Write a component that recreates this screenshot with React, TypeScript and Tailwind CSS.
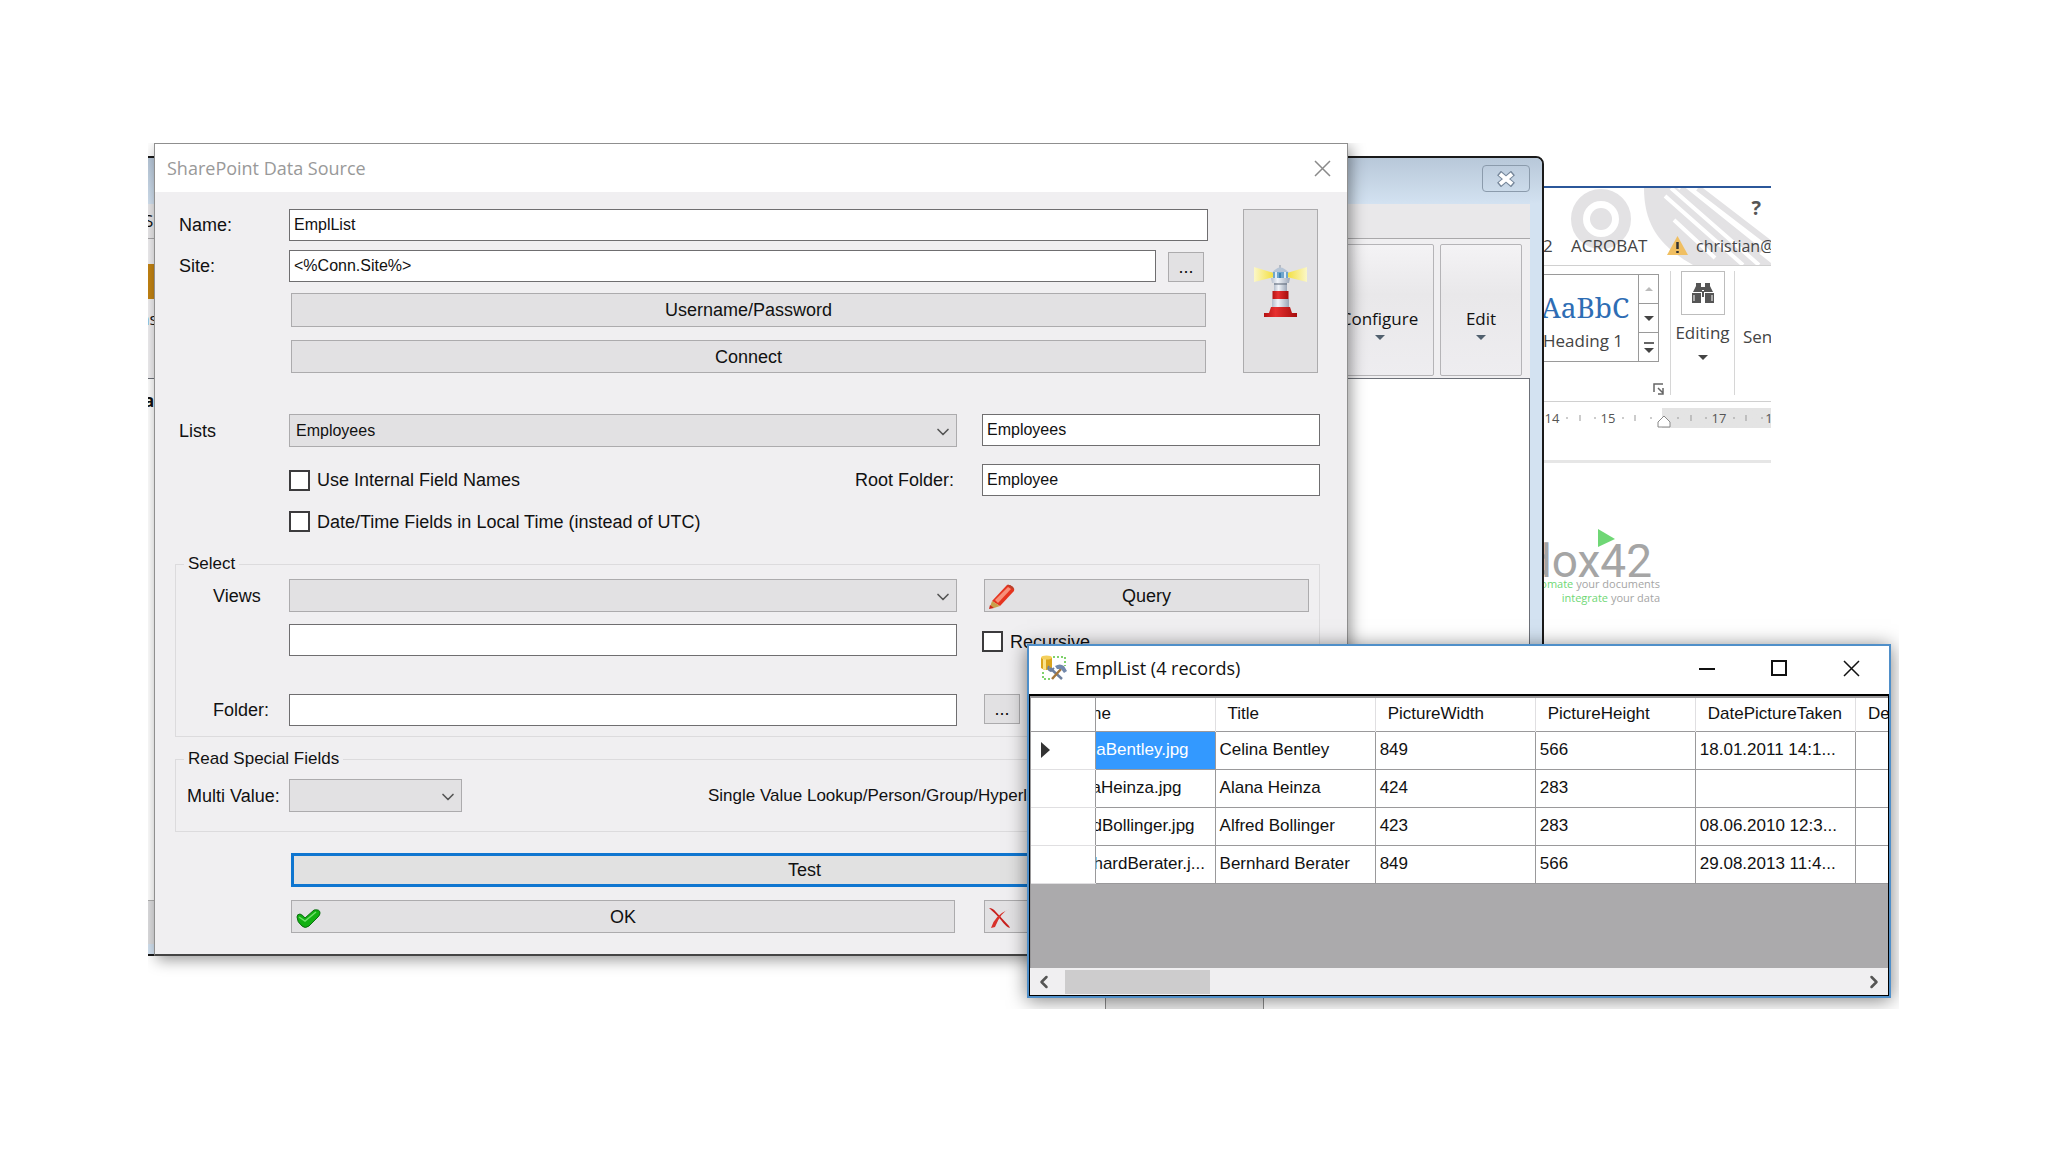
import type { ReactNode } from "react";
import clsx from "clsx";
import { ChevronDown, ChevronLeft, ChevronRight } from "lucide-react";

const columns = ["Title", "PictureWidth", "PictureHeight", "DatePictureTaken", "De"];

const records = [
  {
    name: "CelinaBentley.jpg",
    cells: ["Celina Bentley", "849", "566", "18.01.2011 14:1...", ""],
  },
  {
    name: "AlanaHeinza.jpg",
    cells: ["Alana Heinza", "424", "283", "", ""],
  },
  {
    name: "AlfredBollinger.jpg",
    cells: ["Alfred Bollinger", "423", "283", "08.06.2010 12:3...", ""],
  },
  {
    name: "BernhardBerater.j...",
    cells: ["Bernhard Berater", "849", "566", "29.08.2013 11:4...", ""],
  },
];

export default function App() {
  return (
    <main className="min-h-screen bg-white pt-[143px] pr-[149px] pl-[148px] font-['Liberation_Sans',sans-serif] text-lg leading-5 text-[#111]">
      <div className="relative h-[866px] overflow-hidden">
        <WordWindow />
        <DesignerWindow />
        <div className="absolute bottom-0 left-[957px] h-[40px] w-[159px] border-x border-[#8a8a8a] bg-[#ececec]" />
        <DataSourceDialog />
        <RecordsWindow />
      </div>
    </main>
  );
}

/* ---------- SharePoint Data Source ---------- */

function DataSourceDialog() {
  return (
    <section className="absolute top-0 right-[551px] left-[6px] border border-b-2 border-[#8f8f8f] border-b-[#444] bg-[#f0eff1] shadow-[3px_4px_14px_rgba(0,0,0,0.4)]">
      <header className="flex h-12 items-center justify-between bg-white pr-4 pl-3">
        <h1 className="font-['Open_Sans',sans-serif] text-lg text-[#999]">
          SharePoint Data Source
        </h1>
        <button aria-label="Close" className="text-[#8a8a8a]">
          <CloseGlyph />
        </button>
      </header>

      <form className="pt-[17px] pr-[27px] pb-[21px] pl-5" onSubmit={(e) => e.preventDefault()}>
        <div className="flex gap-[35px] pr-0.5">
          <div className="flex-1">
            <div className="flex">
              <Label htmlFor="name">Name:</Label>
              <TextBox id="name" value="EmplList" className="flex-1" />
            </div>
            <div className="mt-[9px] flex items-end">
              <Label htmlFor="site">Site:</Label>
              <TextBox id="site" value="<%Conn.Site%>" className="flex-1" />
              <PushButton className="mr-1 ml-3 h-[30px] w-9">...</PushButton>
            </div>
            <PushButton className="mt-[11px] ml-[116px] h-[34px] w-[calc(100%-118px)]">
              Username/Password
            </PushButton>
            <PushButton className="mt-[13px] ml-[116px] h-[33px] w-[calc(100%-118px)]">
              Connect
            </PushButton>
          </div>
          <PushButton label="Test connection" className="flex w-[75px] items-center justify-center">
            <Lighthouse />
          </PushButton>
        </div>

        <div className="mt-[41px] flex">
          <Label htmlFor="lists">Lists</Label>
          <DropDown id="lists" value="Employees" className="flex-1" />
          <TextBox label="List name" value="Employees" className="ml-[25px] w-[338px]" />
        </div>
        <div className="mt-[17px] flex items-center">
          <CheckBox id="internal" className="ml-[114px] flex-1">
            Use Internal Field Names
          </CheckBox>
          <label htmlFor="root">Root Folder:</label>
          <TextBox id="root" value="Employee" className="ml-7 w-[338px]" />
        </div>
        <CheckBox id="local" className="mt-[15px] ml-[114px]">
          Date/Time Fields in Local Time (instead of UTC)
        </CheckBox>

        <Group title="Select" className="mt-[22px] pt-[5px] pb-2.5">
          <div className="flex">
            <Label htmlFor="views" inset>
              Views
            </Label>
            <DropDown id="views" value="" className="flex-1" />
            <PushButton className="relative mr-2.5 ml-[27px] w-[325px]">
              <Pencil />
              Query
            </PushButton>
          </div>
          <div className="mt-3 flex items-start">
            <TextBox label="View name" value="" className="ml-[113px] flex-1" />
            <CheckBox id="recursive" className="mt-[7px] ml-[25px] w-[337px]">
              Recursive
            </CheckBox>
          </div>
          <div className="mt-[38px] flex">
            <Label htmlFor="folder" inset>
              Folder:
            </Label>
            <TextBox id="folder" value="" className="flex-1" />
            <div className="w-[362px] pl-[27px]">
              <PushButton className="h-[30px] w-9">...</PushButton>
            </div>
          </div>
        </Group>

        <Group title="Read Special Fields" className="mt-3 pt-2.5 pb-[19px]">
          <div className="flex items-center">
            <label htmlFor="multi" className="w-[113px] pl-[11px] whitespace-nowrap">
              Multi Value:
            </label>
            <DropDown id="multi" value="" className="w-[173px]" />
            <label htmlFor="single" className="ml-[246px] flex-1 text-[17px] whitespace-nowrap">
              Single Value Lookup/Person/Group/Hyperlink:
            </label>
            <DropDown id="single" value="" className="w-[120px]" />
          </div>
        </Group>

        <div className="mt-[21px] mr-0.5 ml-[116px]">
          <button className="h-[34px] w-full border-[3px] border-[#0f76d0] bg-[#e1e1e1]">
            Test
          </button>
          <div className="mt-[13px] flex h-[33px] gap-[29px]">
            <PushButton className="relative flex-1">
              <CheckMark />
              OK
            </PushButton>
            <PushButton className="relative w-[334px]">
              <Cross />
              Cancel
            </PushButton>
          </div>
        </div>
      </form>
    </section>
  );
}

function Label({ htmlFor, inset, children }: { htmlFor: string; inset?: boolean; children: ReactNode }) {
  return (
    <label
      htmlFor={htmlFor}
      className={clsx("self-center", inset ? "w-[113px] pl-[37px]" : "w-[114px] pl-1")}
    >
      {children}
    </label>
  );
}

type FieldProps = {
  id?: string;
  label?: string;
  value: string;
  className?: string;
};

function TextBox({ id, label, value, className }: FieldProps) {
  return (
    <input
      id={id}
      aria-label={label}
      defaultValue={value}
      className={clsx(
        "h-8 min-w-0 border border-[#6f6e70] bg-white px-1 text-base outline-none",
        className,
      )}
    />
  );
}

function DropDown({ id, label, value, className }: FieldProps) {
  return (
    <div className={clsx("relative", className)}>
      <select
        id={id}
        aria-label={label}
        defaultValue={value}
        className="block h-[33px] w-full appearance-none border border-[#acabad] bg-[#e2e1e3] px-1.5 text-base outline-none"
      >
        <option>{value}</option>
      </select>
      <ChevronDown
        className="pointer-events-none absolute top-2 right-1 size-5 text-[#555]"
        strokeWidth={2}
      />
    </div>
  );
}

function CheckBox({ id, className, children }: { id: string; className?: string; children: ReactNode }) {
  return (
    <div className={clsx("flex items-center gap-[7px]", className)}>
      <input
        id={id}
        type="checkbox"
        className="size-[21px] appearance-none border-2 border-[#3c3b3d] bg-white"
      />
      <label htmlFor={id}>{children}</label>
    </div>
  );
}

function PushButton({ label, className, children }: { label?: string; className?: string; children: ReactNode }) {
  return (
    <button
      type="button"
      aria-label={label}
      className={clsx("border border-[#acabad] bg-[#e2e1e3]", className)}
    >
      {children}
    </button>
  );
}

function Group({ title, className, children }: { title: string; className?: string; children: ReactNode }) {
  return (
    <fieldset className={clsx("min-w-0 border border-[#dcdbdd]", className)}>
      <legend className="ml-2 px-1 text-[17px]">{title}</legend>
      {children}
    </fieldset>
  );
}

/* ---------- EmplList records ---------- */

function RecordsWindow() {
  return (
    <section className="absolute top-[501px] right-[8px] left-[879px] border-2 border-[#4f8fc9] bg-white shadow-[0_2px_18px_rgba(0,0,0,0.5)]">
      <header className="flex h-12 items-center pr-[29px] pb-1 pl-3">
        <DatabaseTools />
        <h2 className="ml-2 flex-1 font-['Open_Sans',sans-serif] text-lg leading-5">EmplList (4 records)</h2>
        <div className="flex items-center gap-14">
          <button aria-label="Minimize">
            <svg width="16" height="16" stroke="currentColor" strokeWidth="2">
              <path d="M0 9H16" />
            </svg>
          </button>
          <button aria-label="Maximize">
            <svg width="16" height="16" fill="none" stroke="currentColor" strokeWidth="2">
              <path d="M1 1H15V15H1Z" />
            </svg>
          </button>
          <button aria-label="Close">
            <CloseGlyph />
          </button>
        </div>
      </header>

      <div className="border border-t-2 border-black bg-[#abaaac]">
        <div className="h-[272px] overflow-hidden border-t-2 border-l border-[#9a999b]">
          <table className="w-[985px] table-fixed border-collapse bg-white text-[17px] leading-5">
            <thead>
              <tr className="h-[33px] border-b border-[#9a999b]">
                <th className="w-16" aria-label="Row" />
                <th className="w-[120px] border-l border-l-[#9a999b] p-0 text-left font-normal">
                  <div className="overflow-hidden">
                    <span className="-ml-[30px] whitespace-nowrap">Name</span>
                  </div>
                </th>
                {columns.map((column) => (
                  <th
                    key={column}
                    className="w-40 border-l border-[#e0dfe1] p-0 pl-3 text-left font-normal"
                  >
                    {column}
                  </th>
                ))}
              </tr>
            </thead>
            <tbody>
              {records.map((record, index) => (
                <RecordRow key={record.name} record={record} current={index === 0} />
              ))}
            </tbody>
          </table>
        </div>
        <div className="flex h-[27px] items-center bg-[#f0eff1]">
          <button aria-label="Scroll left" className="w-[35px] pl-1">
            <ChevronLeft className="size-5 text-[#555]" strokeWidth={3} />
          </button>
          <div className="h-6 w-[145px] bg-[#cdcccd]" />
          <button aria-label="Scroll right" className="ml-auto pr-1">
            <ChevronRight className="size-5 text-[#555]" strokeWidth={3} />
          </button>
        </div>
      </div>
    </section>
  );
}

function RecordRow({ record, current }: { record: (typeof records)[number]; current: boolean }) {
  return (
    <tr className="h-[38px]">
      <th className="border-b border-[#e0dfe1] p-0 pl-2.5">
        {current && (
          <svg width="9" height="16" fill="#333">
            <path d="M0 0L9 8L0 16Z" />
          </svg>
        )}
      </th>
      <td
        className={clsx("border border-[#9a999b] p-0", current && "bg-[#3399ff] text-white")}
      >
        {/* the grid is scrolled, so the column starts left of the row header */}
        <div className="overflow-hidden">
          <span className="-ml-[38px] whitespace-nowrap">{record.name}</span>
        </div>
      </td>
      {record.cells.map((cell, i) => (
        <td key={i} className="border border-[#9a999b] p-0 pl-1 whitespace-nowrap">
          {cell}
        </td>
      ))}
    </tr>
  );
}

/* ---------- designer window behind the dialog ---------- */

function DesignerWindow() {
  return (
    <section className="absolute top-[13px] right-[355px] -left-3 flex h-[800px] flex-col rounded-tr-lg border-2 border-[#1a1a1a] bg-[#d3e2f1] pr-3 font-['Open_Sans',sans-serif] text-[17px]">
      <header className="-mr-3 flex h-[46px] justify-end rounded-tr-md bg-linear-to-b from-[#b8c8d9] to-[#d3e2f1] pt-[7px] pr-3">
        <button
          aria-label="Close designer"
          className="flex h-[27px] w-12 items-center justify-center rounded-sm border border-[#8b9bac]"
        >
          <svg width="20" height="16" viewBox="0 0 20 16">
            <path d="M3 2L17 14M17 2L3 14" stroke="#75869a" strokeWidth="6" />
            <path d="M4 3L16 13M16 3L4 13" stroke="#fff" strokeWidth="4" />
          </svg>
        </button>
      </header>
      <div className="flex h-[35px] items-center border-b border-[#a9a8aa] bg-[#e9e8ea] pl-1.5">S</div>
      <div className="flex h-[139px] items-start justify-between bg-[#f0eff1] pt-[5px] pr-2">
        <div className="pt-5 pl-1.5">
          <div className="h-[35px] w-6 rounded-sm bg-[#c48413]" />
          <div className="mt-2.5 -ml-1">as</div>
        </div>
        <div className="flex gap-1.5">
          <RibbonButton className="w-[109px]">Configure</RibbonButton>
          <RibbonButton className="w-[82px]">Edit</RibbonButton>
        </div>
      </div>
      <div className="flex-1 border-t border-r border-[#6c7078] bg-white pt-3 pl-1.5 font-bold">a</div>
      <div className="mb-2.5 h-11 border-t border-[#b0b0b0] bg-[#dedee0]" />
    </section>
  );
}

function RibbonButton({ className, children }: { className: string; children: ReactNode }) {
  return (
    <button
      className={clsx(
        "flex h-[132px] flex-col items-center rounded-xs border border-[#b5b4b7] bg-linear-to-b from-[#f4f3f5] via-[#e9e8ea] via-38% to-[#eeedf0] pt-16",
        className,
      )}
    >
      {children}
      <DownArrow className="mt-1.5 text-[#51606e]" />
    </button>
  );
}

function DownArrow({ className }: { className?: string }) {
  return (
    <svg width="10" height="5" fill="currentColor" className={className}>
      <path d="M0 0H10L5 5Z" />
    </svg>
  );
}

/* ---------- Word window in the far back ---------- */

function WordWindow() {
  return (
    <section className="absolute top-[43px] right-[128px] flex h-[460px] w-[240px] flex-col overflow-hidden border-t-2 border-[#2b579a] bg-white pl-3 font-['Open_Sans',sans-serif] text-[17px] leading-5 text-[#444]">
      <div className="relative h-[78px] border-b border-[#d0d0d0]">
        <svg className="absolute inset-0" width="228" height="77" fill="none">
          <circle cx="58" cy="31" r="24" stroke="#e3e2e4" strokeWidth="12" />
          <circle cx="58" cy="31" r="11" fill="#e3e2e4" />
          <path
            d="M101 0H134L228 75V77H150C120 60 101 40 101 0Z"
            fill="#e3e2e4"
          />
          <path
            d="M122 8L200 77M128 0L216 77M146 0L228 62M163 0L228 44M131 32L172 70"
            stroke="#fff"
            strokeWidth="4"
          />
          <path d="M138 0L218 64M155 0L228 56" stroke="#e3e2e4" strokeWidth="6" />
        </svg>
        <button aria-label="Help" className="absolute top-2 right-2.5 text-xl leading-6 font-bold text-[#555]">
          ?
        </button>
        <div className="absolute top-12 flex items-center whitespace-nowrap">
          <span className="w-7">2</span>
          <span className="w-24">ACROBAT</span>
          <svg width="21" height="20" viewBox="0 0 21 20">
            <path d="M10.500 0L21 19H0Z" fill="#f0bf62" />
            <path d="M10.500 6V13M10.500 15V17" stroke="#333" strokeWidth="2.500" />
          </svg>
          <span className="ml-2 text-base leading-5">christian@</span>
        </div>
      </div>

      <div className="flex h-[136px] items-start border-b border-[#d0d0d0] pt-[5px]">
        <div className="mt-[3px] flex h-[88px] w-[116px] shrink-0 border border-l-0 border-[#9a9a9a]">
          <div className="flex-1 whitespace-nowrap">
            <div className="-ml-0.5 pt-4 font-['Noto_Serif','Liberation_Serif',serif] text-[28px] leading-8 text-[#2e6db4]">
              AaBbC
            </div>
            <div className="mt-2">Heading 1</div>
          </div>
          <div className="flex w-5 shrink-0 flex-col divide-y divide-[#9a9a9a] border-l border-[#9a9a9a]">
            <span className="flex flex-1 items-center justify-center">
              <svg width="8" height="4" fill="#bbb">
                <path d="M0 4H8L4 0Z" />
              </svg>
            </span>
            <span className="flex flex-1 items-center justify-center">
              <DownArrow />
            </span>
            <span className="flex flex-1 flex-col items-center justify-center gap-1">
              <span className="h-0.5 w-2.5 bg-[#666]" />
              <DownArrow />
            </span>
          </div>
        </div>
        <div className="flex h-[124px] w-3 shrink-0 items-end border-r border-[#d6d6d6]">
          <svg className="-ml-1.5 shrink-0" width="12" height="12" fill="none" stroke="#666" strokeWidth="1.500">
            <path d="M1 9V1H10M5 5L10 10M10 5V11H5" />
          </svg>
        </div>
        <div className="flex h-[124px] w-16 shrink-0 flex-col items-center border-r border-[#d6d6d6]">
          <button
            aria-label="Find"
            className="flex h-11 w-11 shrink-0 items-center justify-center border border-[#bdbdbd]"
          >
            <Binoculars />
          </button>
          <span className="mt-2">Editing</span>
          <DownArrow className="mt-3" />
        </div>
        <span className="mt-14 ml-2">Sen</span>
      </div>

      <div className="mt-1.5 flex h-5 shrink-0 items-center bg-linear-to-r from-white from-52% to-[#e4e4e4] to-52% text-[13px]">
        <svg width="228" height="20" className="overflow-visible">
          <path
            d="M23 10h2M37 7v6M51 10h2M79 10h2M92 7v6M107 10h2M134 10h2M148 7v6M162 10h2M190 10h2M203 7v6M218 10h2"
            stroke="#999"
          />
          <path d="M115 19V14L121 8L127 14V19Z" fill="#fff" stroke="#888" />
          <g fill="#555" textAnchor="middle">
            <text x="9" y="15">14</text>
            <text x="65" y="15">15</text>
            <text x="176" y="15">17</text>
            <text x="226" y="15">1</text>
          </g>
        </svg>
      </div>
      <div className="mt-8 h-[3px] shrink-0 bg-[#e6e6e6]" />

      <div className="relative mt-[62px] w-[117px] self-start text-[#a5a5a5]">
        <div className="flex h-[52px] justify-end pt-2.5 pr-2 font-['Roboto',sans-serif] text-[46px] leading-[52px]">
          dox42
        </div>
        <svg className="absolute top-1 left-[55px]" width="17" height="18">
          <path d="M0 0L17 10L0 18Z" fill="#6fd775" />
        </svg>
        <div className="flex flex-col items-end text-[11px] leading-[14px] whitespace-nowrap">
          <span>
            <span className="text-[#6fd775]">domate</span> your documents
          </span>
          <span>
            <span className="text-[#6fd775]">integrate</span> your data
          </span>
        </div>
      </div>
    </section>
  );
}

/* ---------- drawings ---------- */

function CloseGlyph() {
  return (
    <svg width="17" height="17" stroke="currentColor" strokeWidth="1.500">
      <path d="M1 1L16 16M16 1L1 16" />
    </svg>
  );
}

function Lighthouse() {
  return (
    <svg width="53" height="52" viewBox="0 0 53 52">
      <defs>
        <linearGradient id="beamLeft">
          <stop offset="0" stopColor="#fbf7c8" />
          <stop offset="1" stopColor="#f3df3c" />
        </linearGradient>
        <linearGradient id="beamRight">
          <stop offset="0" stopColor="#f3df3c" />
          <stop offset="1" stopColor="#fbf7c8" />
        </linearGradient>
        <linearGradient id="stone">
          <stop offset="0" stopColor="#b4bdcb" />
          <stop offset="0.35" stopColor="#f1f4f9" />
          <stop offset="1" stopColor="#9ba6b7" />
        </linearGradient>
        <linearGradient id="paint">
          <stop offset="0" stopColor="#b51212" />
          <stop offset="0.35" stopColor="#e63030" />
          <stop offset="1" stopColor="#a50d0d" />
        </linearGradient>
      </defs>
      <path d="M0 2L20 8V12L0 17Z" fill="url(#beamLeft)" />
      <path d="M53 2L33 8V12L53 17Z" fill="url(#beamRight)" />
      <path d="M26 0V4" stroke="#8d98a8" />
      <path d="M18 8Q26 -3 35 8Z" fill="#b5c4d6" />
      <path d="M19 7H34V14H19Z" fill="#6fa6cc" />
      <path d="M22 7V14M31 7V14" stroke="#dfeaf4" strokeWidth="2" />
      <path d="M26 8V13" stroke="#3f7fb0" strokeWidth="2" />
      <path d="M17 13H36L35 18H18Z" fill="url(#stone)" />
      <path d="M20 18H33V26H20Z" fill="url(#stone)" />
      <path d="M20 18H33V20H20Z" fill="#6c7686" opacity="0.6" />
      <path d="M18.500 26H34.500V34H18.500Z" fill="url(#paint)" />
      <path d="M18 34H35V42H18Z" fill="url(#stone)" />
      <path d="M17 42H36L38 48H43V52H10V48H15Z" fill="url(#paint)" />
    </svg>
  );
}

function Pencil() {
  return (
    <svg className="absolute top-1 left-1" width="26" height="25" viewBox="0 0 26 25">
      <path d="M3 17L18 1Q20 0 24 3Q26 5 25 7L11 22Z" fill="#e5341f" />
      <path d="M6 16L19 3L22 5L9 19Z" fill="#f79079" />
      <path d="M3 17L11 22L5 24L1 23Z" fill="#c9a04a" />
      <path d="M1 21L5 24L0 25Z" fill="#d02818" />
      <path d="M18 1Q20 0 24 3L25 6L18 1Z" fill="#b5442f" />
    </svg>
  );
}

function CheckMark() {
  return (
    <svg className="absolute top-2 left-1" width="25" height="19" viewBox="0 0 25 19">
      <path
        d="M1 8Q1 5 4 5Q7 6 9 9L18 1Q24 0 24 4Q24 6 22 8L13 17Q9 20 6 17Q1 13 1 8Z"
        fill="#12b012"
        stroke="#0b6e10"
      />
      <path d="M3 8L9 12L20 3" fill="none" stroke="#6fe06a" strokeWidth="1.500" />
    </svg>
  );
}

function Cross() {
  return (
    <svg className="absolute top-[7px] left-1" width="22" height="20" viewBox="0 0 22 20">
      <path d="M0 0Q4 0 7 4L20 18L21 20Q17 19 12 12Q7 6 0 0Z" fill="#c8201d" />
      <path d="M20 1Q12 4 6 19L2 20Q5 8 20 1Z" fill="#d8322b" />
    </svg>
  );
}

function DatabaseTools() {
  return (
    <svg width="26" height="26" viewBox="0 0 26 26">
      <path d="M12 2H24V11M2 17V24H9" fill="none" stroke="#55c23c" strokeWidth="1.500" strokeDasharray="2 2" />
      <path d="M0 3H11V13Q5 17 0 13Z" fill="#dba41c" />
      <path d="M2 3V14Q4 15 5 15V3Z" fill="#fbe38a" />
      <ellipse cx="5.500" cy="2.500" rx="5.500" ry="2" fill="#f4cf5c" />
      <path d="M9 13L21 24" stroke="#6d7f9d" strokeWidth="2.500" />
      <path d="M8 11Q6 15 10 16L13 13" fill="none" stroke="#6d7f9d" strokeWidth="2" />
      <path d="M20 14L11 24" stroke="#a5763a" strokeWidth="2.500" />
      <path d="M14 11Q19 8 23 11L26 16L23 18L20 14L16 14Z" fill="#7288ab" />
    </svg>
  );
}

function Binoculars() {
  return (
    <svg width="22" height="20" viewBox="0 0 22 20" fill="#555">
      <path d="M4 0H9V4H13V0H18V3L21 9H12V7H10V9H1L4 3Z" />
      <path d="M0 10H9V20H0ZM13 10H22V20H13ZM10 8H12V14H10Z" />
      <path d="M2 12V18M20 12V18" stroke="#fff" />
    </svg>
  );
}
